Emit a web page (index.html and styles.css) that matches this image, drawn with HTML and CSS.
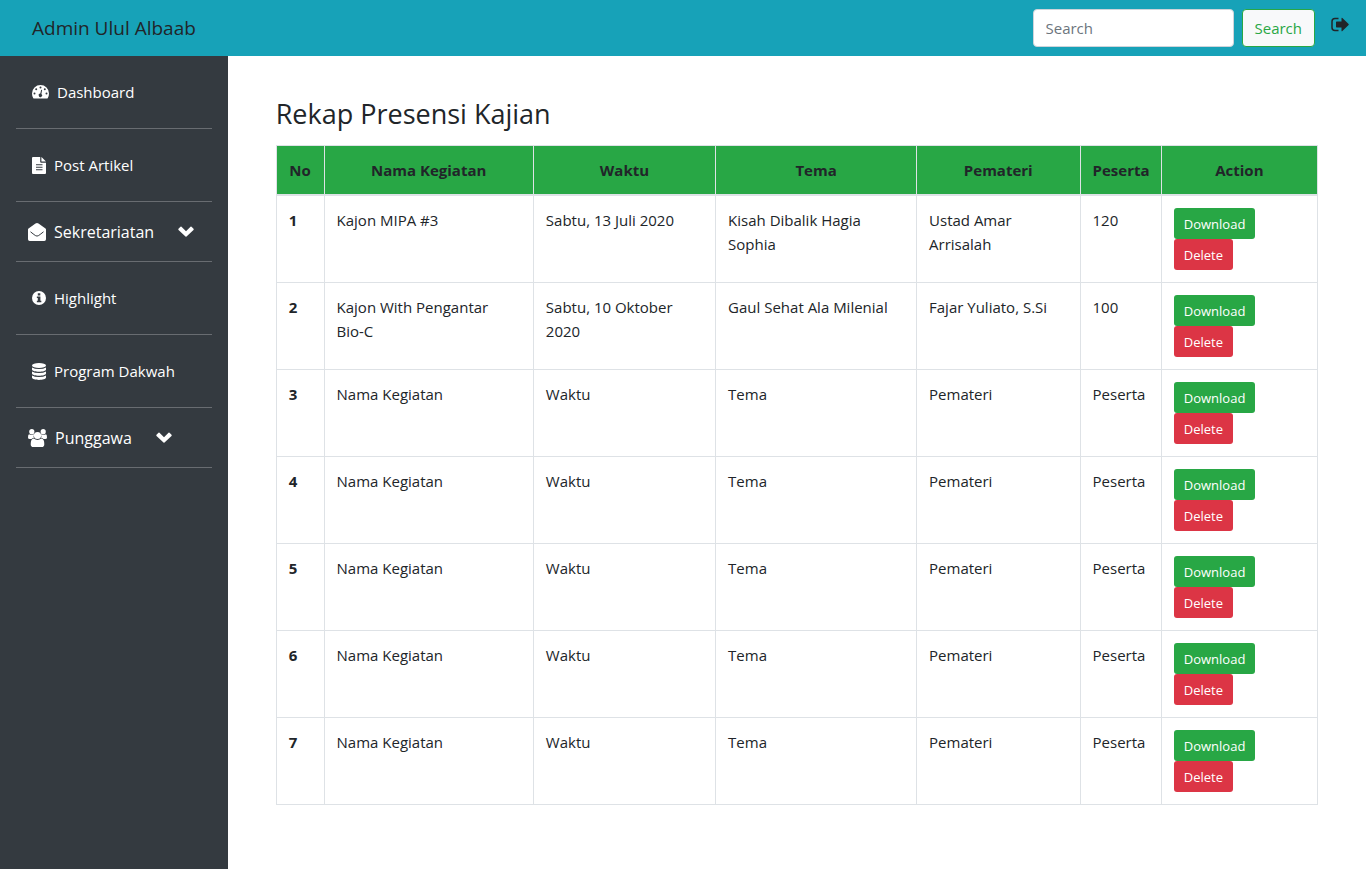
FILE: index.html
```html
<!DOCTYPE html>
<html lang="id">
<head>
<meta charset="utf-8">
<meta name="viewport" content="width=device-width, initial-scale=1">
<title>Admin Ulul Albaab</title>
<link rel="stylesheet" href="styles.css">
</head>
<body>
<header class="navbar">
  <a class="brand" href="#">Admin Ulul Albaab</a>
  <form class="search">
    <input class="search-input" type="search" placeholder="Search" aria-label="Search">
    <button class="search-button" type="button">Search</button>
  </form>
  <a class="logout" href="#" aria-label="Logout">
    <svg class="logout-icon" viewBox="0 0 18 16" aria-hidden="true"><path d="M7.500 1.500H4Q1 1.500 1 4.500V10.500Q1 13.500 4 13.500H7.500" fill="none" stroke="currentColor" stroke-width="1.500"/><path d="M5 5.200Q5 4.500 5.700 4.500H10.500V1.200Q10.600.3 11.400.9L17.600 6.900Q18 7.500 17.600 8.100L11.400 14.100Q10.600 14.700 10.500 13.800V10.500H5.700Q5 10.500 5 9.800Z" fill="currentColor"/></svg>
  </a>
</header>
<div class="layout">
  <nav class="sidebar" aria-label="Menu">
    <ul class="menu">
      <li class="menu-item"><a class="menu-link" href="#">
        <svg class="icon-gauge" viewBox="0 0 17 14" fill="currentColor" aria-hidden="true"><path d="M8.500 0A8.500 8.500 0 0 0 0 8.500Q0 11 1.200 13Q1.500 13.500 2.200 13.500H14.800Q15.500 13.500 15.800 13Q17 11 17 8.500A8.500 8.500 0 0 0 8.500 0Z"/><g fill="#343a40"><circle cx="8.500" cy="2.500" r="1"/><circle cx="4.200" cy="4.200" r="1"/><circle cx="2.500" cy="8.500" r="1"/><circle cx="12.800" cy="4.200" r="1"/><circle cx="14.500" cy="8.500" r="1"/><path d="M9.200 4.800L10.100 5.100L9.400 8.900A1.700 1.700 0 1 1 8.300 8.600Z"/></g></svg>
        Dashboard</a></li>
      <li class="menu-item"><a class="menu-link" href="#">
        <svg class="icon-file" viewBox="0 0 14 17" fill="currentColor" aria-hidden="true"><path fill-rule="evenodd" d="M1 0H8.200V4.800Q8.200 5.700 9.100 5.700H14V16Q14 17 13 17H1Q0 17 0 16V1Q0 0 1 0ZM4 7.200V8.200H10.500V7.200ZM4 9.700V10.700H10.500V9.700ZM4 12.200V13.200H10.500V12.200Z"/><path d="M9.400.1Q9.700.2 10 .5L13.500 4Q13.800 4.300 13.900 4.600H9.400Z"/></svg>
        Post Artikel</a></li>
      <li class="menu-item"><button class="menu-toggle" type="button">
        <svg class="icon-mail" viewBox="0 0 18 18" fill="currentColor" aria-hidden="true"><path d="M0 6.500Q0 6 .5 5.600C3 3.800 5 2.300 7.500.6Q9 -.5 10.500.6C13 2.300 15 3.800 17.500 5.600Q18 6 18 6.500V16.300Q18 18 16.300 18H1.700Q0 18 0 16.300Z"/><path d="M2.500 8.800C4.500 10.400 5.800 11.400 7.300 12.500Q9 13.700 10.700 12.500C12.200 11.400 13.500 10.400 15.500 8.800" fill="none" stroke="#343a40"/></svg>
        Sekretariatan
        <svg class="icon-chevron" viewBox="0 0 16 11" fill="currentColor" aria-hidden="true"><path d="M7.500 10.500L.5 3.900Q0 3.300.5 2.700L2.500.7Q3 .3 3.500.7L8 5.200L12.500.7Q13 .3 13.500.7L15.500 2.700Q16 3.300 15.500 3.900L8.500 10.500Q8 11 7.500 10.500Z"/></svg>
      </button></li>
      <li class="menu-item"><a class="menu-link" href="#">
        <svg class="icon-info" viewBox="0 0 15 15" aria-hidden="true"><circle cx="7.500" cy="7.500" r="7.500" fill="currentColor"/><path d="M6.200 2.400H8.900V4.700H6.200ZM5.200 6H9V10.500H10V12H5.200V10.500H6.200V7.500H5.200Z" fill="#343a40"/></svg>
        Highlight</a></li>
      <li class="menu-item"><a class="menu-link" href="#">
        <svg class="icon-database" viewBox="0 0 14 17" fill="currentColor" aria-hidden="true"><ellipse cx="7" cy="2.500" rx="7" ry="2.500"/><path d="M0 4.400Q2.500 6 7 6T14 4.400V6.500C14 9.500 0 9.500 0 6.500ZM0 8.400Q2.500 10 7 10T14 8.400V10.500C14 13.500 0 13.500 0 10.500ZM0 12.400Q2.500 14 7 14T14 12.400V14.500C14 17.700 0 17.700 0 14.500Z"/></svg>
        Program Dakwah</a></li>
      <li class="menu-item"><button class="menu-toggle" type="button">
        <svg class="icon-users" viewBox="0 0 19 18" fill="currentColor" aria-hidden="true"><circle cx="3.800" cy="2.700" r="2.600"/><circle cx="15.200" cy="2.700" r="2.600"/><path d="M1 5.200Q3.500 6.500 5.600 5.200L6.200 5.500Q5.200 7 5.800 9Q4.300 9.200 3.500 10H1.800Q0 10 0 8.400Q0 5.500 1 5.200ZM18 5.200Q15.500 6.500 13.400 5.200L12.800 5.500Q13.800 7 13.200 9Q14.700 9.200 15.500 10H17.200Q19 10 19 8.400Q19 5.500 18 5.200Z"/><circle cx="9.500" cy="6.500" r="3.600"/><path d="M5.700 9.600Q9.500 12.500 13.300 9.600Q16.300 9.800 16.300 15.200Q16.300 18 13.700 18H5.300Q2.700 18 2.700 15.200Q2.700 9.800 5.700 9.600Z"/></svg>
        Punggawa
        <svg class="icon-chevron" viewBox="0 0 16 11" fill="currentColor" aria-hidden="true"><path d="M7.500 10.500L.5 3.900Q0 3.300.5 2.700L2.500.7Q3 .3 3.500.7L8 5.200L12.500.7Q13 .3 13.500.7L15.500 2.700Q16 3.300 15.500 3.900L8.500 10.500Q8 11 7.500 10.500Z"/></svg>
      </button></li>
    </ul>
  </nav>
  <main class="content">
    <h1 class="title">Rekap Presensi Kajian</h1>
    <table class="table">
      <colgroup><col class="col-no"><col class="col-name"><col class="col-time"><col class="col-topic"><col class="col-speaker"><col class="col-count"><col class="col-action"></colgroup>
      <thead>
        <tr><th scope="col">No</th><th scope="col">Nama Kegiatan</th><th scope="col">Waktu</th><th scope="col">Tema</th><th scope="col">Pemateri</th><th scope="col">Peserta</th><th scope="col">Action</th></tr>
      </thead>
      <tbody>
        <tr><th scope="row">1</th><td>Kajon MIPA #3</td><td>Sabtu, 13 Juli 2020</td><td>Kisah Dibalik Hagia Sophia</td><td>Ustad Amar Arrisalah</td><td>120</td><td><div class="actions"><button class="btn btn-download" type="button">Download</button><button class="btn btn-delete" type="button">Delete</button></div></td></tr>
        <tr><th scope="row">2</th><td>Kajon With Pengantar <span class="nowrap">Bio-C</span></td><td>Sabtu, 10 Oktober 2020</td><td>Gaul Sehat Ala Milenial</td><td>Fajar Yuliato, S.Si</td><td>100</td><td><div class="actions"><button class="btn btn-download" type="button">Download</button><button class="btn btn-delete" type="button">Delete</button></div></td></tr>
        <tr><th scope="row">3</th><td>Nama Kegiatan</td><td>Waktu</td><td>Tema</td><td>Pemateri</td><td>Peserta</td><td><div class="actions"><button class="btn btn-download" type="button">Download</button><button class="btn btn-delete" type="button">Delete</button></div></td></tr>
        <tr><th scope="row">4</th><td>Nama Kegiatan</td><td>Waktu</td><td>Tema</td><td>Pemateri</td><td>Peserta</td><td><div class="actions"><button class="btn btn-download" type="button">Download</button><button class="btn btn-delete" type="button">Delete</button></div></td></tr>
        <tr><th scope="row">5</th><td>Nama Kegiatan</td><td>Waktu</td><td>Tema</td><td>Pemateri</td><td>Peserta</td><td><div class="actions"><button class="btn btn-download" type="button">Download</button><button class="btn btn-delete" type="button">Delete</button></div></td></tr>
        <tr><th scope="row">6</th><td>Nama Kegiatan</td><td>Waktu</td><td>Tema</td><td>Pemateri</td><td>Peserta</td><td><div class="actions"><button class="btn btn-download" type="button">Download</button><button class="btn btn-delete" type="button">Delete</button></div></td></tr>
        <tr><th scope="row">7</th><td>Nama Kegiatan</td><td>Waktu</td><td>Tema</td><td>Pemateri</td><td>Peserta</td><td><div class="actions"><button class="btn btn-download" type="button">Download</button><button class="btn btn-delete" type="button">Delete</button></div></td></tr>
      </tbody>
    </table>
  </main>
</div>
</body>
</html>
```
FILE: styles.css
```css
*, *::before, *::after { box-sizing: border-box; }

body {
  display: flex;
  flex-direction: column;
  min-height: 100vh;
  margin: 0;
  background: #fff;
  color: #212529;
  font: 15px/24px "Open Sans", "Noto Sans", sans-serif;
}

button, input { font: inherit; }
a { color: inherit; text-decoration: none; }

.navbar {
  display: flex;
  align-items: center;
  min-height: 56px;
  padding: 8px 17px 8px 32px;
  background: #17a2b8;
}

.brand { font-size: 19px; line-height: 30px; }

.search {
  display: flex;
  gap: 8px;
  margin-left: auto;
}

.search-input {
  width: 201px;
  height: 38px;
  padding: 6px 12px;
  border: 1px solid #ced4da;
  border-radius: 4px;
  background: #fff;
  color: #495057;
}

.search-input::placeholder { color: #6c757d; opacity: 1; }

.search-button {
  height: 38px;
  padding: 0 12px;
  border: 1px solid #28a745;
  border-radius: 4px;
  background: #f8f9fa;
  color: #28a745;
}

.logout {
  display: flex;
  margin: 0 0 6px 16px;
}

.logout-icon { width: 18px; height: 16px; }

.layout {
  display: grid;
  grid-template-columns: 1fr 5fr;
  flex: 1;
}

.sidebar {
  padding: 16px;
  background: #343a40;
  color: #fff;
}

.menu {
  margin: 0;
  padding: 0;
  list-style: none;
}

.menu-item {
  margin-bottom: 16px;
  padding-bottom: 16px;
  border-bottom: 1px solid #686c71;
}

.menu-link {
  display: flex;
  align-items: center;
  gap: 8px;
  padding: 8px 16px;
}

.menu-toggle {
  display: flex;
  align-items: center;
  gap: 8px;
  height: 27px;
  padding: 0 12px;
  border: 0;
  background: none;
  color: inherit;
  font-size: 16px;
}

.menu svg { flex: none; }
.icon-gauge { width: 17px; height: 14px; }
.icon-file, .icon-database { width: 14px; height: 17px; }
.icon-info { width: 14px; height: 14px; }
.icon-mail { width: 18px; height: 18px; }
.icon-users { width: 19px; height: 18px; }
.icon-chevron { width: 16px; height: 11px; margin-left: 16px; }

.content {
  min-width: 0;
  padding: 40px 48px;
}

.title {
  margin: 0 0 14px;
  font-size: 27px;
  font-weight: 500;
  line-height: 35px;
}

.table {
  width: 100%;
  table-layout: fixed;
  border-collapse: collapse;
}

.table th, .table td {
  padding: 12px;
  border: 1px solid #dee2e6;
  text-align: left;
  vertical-align: top;
}

.table thead th {
  border-bottom-width: 2px;
  background: #28a745;
  text-align: center;
}

.nowrap { white-space: nowrap; }

.col-no { width: 4.6%; }
.col-name { width: 20.1%; }
.col-time { width: 17.5%; }
.col-topic { width: 19.3%; }
.col-speaker { width: 15.7%; }
.col-count { width: 7.8%; }
.col-action { width: 15%; }

.actions {
  display: flex;
  flex-direction: column;
  align-items: flex-start;
}

.btn {
  height: 31px;
  padding: 0 10px;
  border: 0;
  border-radius: 3px;
  color: #fff;
  font-size: 13px;
}

.btn-download { background: #28a745; }
.btn-delete { background: #dc3545; }
```
